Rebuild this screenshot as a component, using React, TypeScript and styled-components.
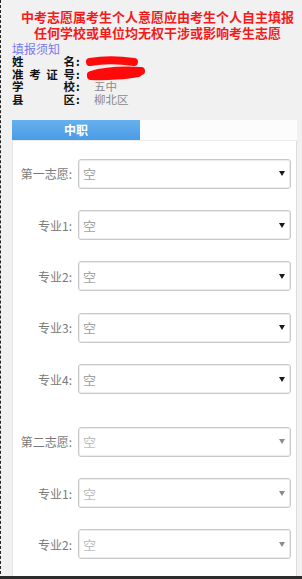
import React from "react";
import styled, { createGlobalStyle } from "styled-components";

const GlobalStyle = createGlobalStyle`
  html, body {
    margin: 0;
    padding: 0;
  }
  body {
    font-family: "Noto Sans CJK SC", "DejaVu Sans", sans-serif;
    background: #f1f1f1;
  }
`;

const Page = styled.div`
  box-sizing: border-box;
  height: 100vh;
  overflow: hidden;
  background: #f1f1f1;
  border-left: 1px dashed #222;
  border-bottom: 3px solid #2c2c2c;
  padding: 9px 5px 0 11px;
  display: flex;
  flex-direction: column;
`;

const Notice = styled.h1`
  margin: 0;
  color: #f21c1c;
  font-size: 13px;
  line-height: 16px;
  font-weight: bold;
  text-align: center;
  padding-left: 6px;
`;

const GuideLink = styled.a`
  display: block;
  margin-top: 1px;
  color: #7878f0;
  font-size: 12px;
  line-height: 13px;
  height: 13px;
  text-decoration: none;
`;

const InfoList = styled.div`
  display: flex;
  flex-direction: column;
  font-size: 11.5px;
  line-height: 12.7px;
`;

const InfoRow = styled.div`
  display: flex;
  align-items: center;
  height: 12.7px;
`;

const InfoLabel = styled.span`
  display: inline-block;
  width: 63px;
  font-weight: bold;
  color: #111;
  text-align: justify;
  text-align-last: justify;
`;

const Colon = styled.span`
  width: 18px;
  font-weight: bold;
  color: #111;
  padding-left: 1px;
`;

const InfoValue = styled.span`
  color: #8a8a8a;
`;

const Scribble = styled.svg`
  display: block;
  overflow: visible;
  margin-left: -8px;
`;

const Tabs = styled.div`
  margin-top: 14px;
  display: flex;
  height: 20px;
  background: #fcfcfc;
  border-bottom: 1px solid #ececec;
`;

const Tab = styled.div<{ $active?: boolean }>`
  width: 128px;
  display: flex;
  align-items: center;
  justify-content: center;
  font-size: 12px;
  font-weight: bold;
  color: ${(p) => (p.$active ? "#fff" : "#555")};
  background: ${(p) =>
    p.$active ? "linear-gradient(#66b0ec, #4a9be6)" : "transparent"};
`;

const Panel = styled.div`
  flex: 1;
  background: #fff;
  border-left: 1px solid #e6e6e6;
  border-right: 1px solid #dedede;
  padding: 18px 5px 0 0;
  display: flex;
  flex-direction: column;
  gap: 32.7px;
`;

const Group = styled.div`
  display: flex;
  flex-direction: column;
  gap: 21.33px;
`;

const Field = styled.div`
  display: grid;
  grid-template-columns: 59px 1fr;
  column-gap: 6px;
  align-items: center;
`;

const FieldLabel = styled.label`
  text-align: right;
  font-size: 12px;
  color: #7a7a7a;
  white-space: nowrap;
`;

const Select = styled.div<{ $disabled?: boolean }>`
  box-sizing: border-box;
  height: 30px;
  border: 1px solid #c9c9c9;
  border-radius: 3px;
  box-shadow: inset 0 0 0 1px #ededed;
  display: flex;
  align-items: center;
  justify-content: space-between;
  padding: 0 5px 0 4px;
  font-size: 13px;
  color: ${(p) => (p.$disabled ? "#bdbdbd" : "#a3a3a3")};
`;

const Caret = styled.span<{ $disabled?: boolean }>`
  width: 0;
  height: 0;
  border-left: 3px solid transparent;
  border-right: 3px solid transparent;
  border-top: 5px solid ${(p) => (p.$disabled ? "#8c8c8c" : "#1a1a1a")};
`;

const Redacted = ({ width, tall }: { width: number; tall?: boolean }) => (
  <Scribble width={width} height={tall ? 12 : 9} viewBox={`0 0 ${width} ${tall ? 12 : 9}`}>
    {tall ? (
      <path
        d={`M5 7 C ${width * 0.3} 3, ${width * 0.6} 2, ${width - 5} 3 M5 8 C ${width * 0.35} 9, ${width * 0.7} 7, ${width - 8} 5`}
        stroke="#ff0a0a"
        strokeWidth={8}
        strokeLinecap="round"
        fill="none"
      />
    ) : (
      <path
        d={`M4 5 C ${width * 0.3} 3, ${width * 0.65} 3, ${width - 4} 5`}
        stroke="#ff0a0a"
        strokeWidth={8}
        strokeLinecap="round"
        fill="none"
      />
    )}
  </Scribble>
);

type Info = { label: string; value?: string; redact?: number; tall?: boolean };

const info: Info[] = [
  { label: "姓名", redact: 52 },
  { label: "准考证号", redact: 60, tall: true },
  { label: "学校", value: "五中" },
  { label: "县区", value: "柳北区" },
];

const groups = [
  { first: "第一志愿", majors: 4, disabled: false },
  { first: "第二志愿", majors: 2, disabled: true },
];

export default function App() {
  return (
    <>
      <GlobalStyle />
      <Page>
        <Notice>
          中考志愿属考生个人意愿应由考生个人自主填报
          <br />
          任何学校或单位均无权干涉或影响考生志愿
        </Notice>
        <GuideLink href="#">填报须知</GuideLink>
        <InfoList>
          {info.map((row) => (
            <InfoRow key={row.label}>
              <InfoLabel>{row.label}</InfoLabel>
              <Colon>:</Colon>
              {row.redact ? (
                <Redacted width={row.redact} tall={row.tall} />
              ) : (
                <InfoValue>{row.value}</InfoValue>
              )}
            </InfoRow>
          ))}
        </InfoList>
        <Tabs>
          <Tab $active>中职</Tab>
        </Tabs>
        <Panel>
          {groups.map((g) => (
            <Group key={g.first}>
              <Field>
                <FieldLabel>{g.first}:</FieldLabel>
                <Select $disabled={g.disabled}>
                  空<Caret $disabled={g.disabled} />
                </Select>
              </Field>
              {Array.from({ length: g.majors }, (_, i) => (
                <Field key={i}>
                  <FieldLabel>专业{i + 1}:</FieldLabel>
                  <Select $disabled={g.disabled}>
                    空<Caret $disabled={g.disabled} />
                  </Select>
                </Field>
              ))}
            </Group>
          ))}
        </Panel>
      </Page>
    </>
  );
}
